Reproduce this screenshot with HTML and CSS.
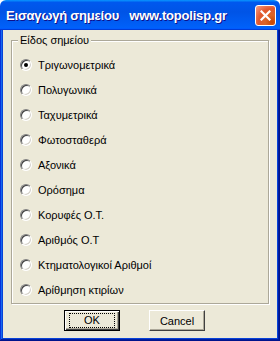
FILE: index.html
```html
<!DOCTYPE html>
<html>
<head>
  <title>Εισαγωγή σημείου</title>
  <link rel="stylesheet" href="styles.css">
</head>
<body>
  <div class="window">
    <div class="titlebar">
      <span class="title">Εισαγωγή σημείου   www.topolisp.gr</span>
      <button class="close" aria-label="Close">
        <svg width="11" height="11" viewBox="0 0 11 11"><path d="M1.5 1.5 L9.5 9.5 M9.5 1.5 L1.5 9.5" stroke="#fff" stroke-width="2.2" stroke-linecap="square"/></svg>
      </button>
    </div>
    <div class="frame">
      <div class="client">
        <div class="group">
          <span class="group-title">Είδος σημείου</span>
          <label class="option"><span class="radio checked"></span>Τριγωνομετρικά</label>
          <label class="option"><span class="radio"></span>Πολυγωνικά</label>
          <label class="option"><span class="radio"></span>Ταχυμετρικά</label>
          <label class="option"><span class="radio"></span>Φωτοσταθερά</label>
          <label class="option"><span class="radio"></span>Αξονικά</label>
          <label class="option"><span class="radio"></span>Ορόσημα</label>
          <label class="option"><span class="radio"></span>Κορυφές Ο.Τ.</label>
          <label class="option"><span class="radio"></span>Αριθμός Ο.Τ</label>
          <label class="option"><span class="radio"></span>Κτηματολογικοί Αριθμοί</label>
          <label class="option"><span class="radio"></span>Αρίθμηση κτιρίων</label>
        </div>
        <div class="buttons">
          <button class="btn default"><span class="focus">OK</span></button>
          <button class="btn">Cancel</button>
        </div>
      </div>
    </div>
  </div>
</body>
</html>
```

FILE: styles.css
```css
body {
  margin: 0;
  padding: 0;
  font-family: 'Liberation Sans', Arial, sans-serif;
  font-size: 11px;
  color: #000;
  background: #fff;
}
.window {
  width: 280px;
  height: 341px;
  display: flex;
  flex-direction: column;
}
.titlebar {
  height: 30px;
  flex: none;
  display: flex;
  align-items: center;
  justify-content: space-between;
  padding: 0 4px 0 6px;
  box-sizing: border-box;
  background: linear-gradient(180deg, #0997ff, #0058ee 8%, #0054e6 40%, #0060f8 88%, #0062fa 93%, #005bff 95%, #003dd7 96%, #003dd7);
  border-radius: 6px 6px 0 0;
}
.title {
  white-space: pre;
  color: #fff;
  font-family: 'Liberation Sans', Arial, sans-serif;
  font-weight: bold;
  font-size: 13px;
  letter-spacing: -0.2px;
  text-shadow: 1px 1px 0 #0f1089;
}
.close {
  width: 21px;
  height: 21px;
  padding: 0;
  border: 1px solid #fff;
  border-radius: 3px;
  background: radial-gradient(circle at 85% 85%, #cc4600 0%, #dc6527 30%, #e2592f 60%, #f7a08a 100%);
  display: flex;
  align-items: center;
  justify-content: center;
}
.frame {
  flex: 1;
  display: flex;
  padding: 0 3px 3px;
  background: #0842d8;
  box-shadow: inset -1px -1px #00138c, inset 1px 0 #0831d9, inset -2px -2px #001ea0, inset 2px 0 #166aee;
}
.client {
  flex: 1;
  background: #ece9d8;
  display: flex;
  flex-direction: column;
}
.group {
  position: relative;
  margin: 10px 0 0 8px;
  width: 258px;
  height: 264px;
  box-sizing: border-box;
  border: 1px solid #aca899;
  box-shadow: 1px 1px 0 #fff, inset 1px 1px 0 #fff;
  padding: 11px 0 0 8px;
}
.group-title {
  position: absolute;
  top: -7px;
  left: 6px;
  padding: 0 2px;
  line-height: 13px;
  background: #ece9d8;
}
.option {
  display: flex;
  align-items: center;
  height: 25px;
  gap: 6px;
}
.radio {
  width: 12px;
  height: 12px;
  box-sizing: border-box;
  border-radius: 50%;
  background: #fff;
  border: 1px solid;
  border-color: #808080 #fff #fff #808080;
  box-shadow: inset 1px 1px 0 #404040, inset -1px -1px 0 #d4d0c8;
  display: flex;
  align-items: center;
  justify-content: center;
}
.radio.checked::after {
  content: "";
  width: 4px;
  height: 4px;
  border-radius: 50%;
  background: #000;
}
.buttons {
  display: flex;
  gap: 29px;
  margin: 6px 0 0 61px;
}
.btn {
  width: 56px;
  height: 21px;
  padding: 0;
  font-family: 'Liberation Sans', Arial, sans-serif;
  font-size: 11px;
  color: #000;
  background: #ece9d8;
  border: 1px solid;
  border-color: #fff #404040 #404040 #fff;
  box-shadow: inset -1px -1px 0 #aca899;
}
.btn.default {
  border: 1px solid #000;
  box-shadow: inset 1px 1px 0 #fff, inset -1px -1px 0 #404040, inset -2px -2px 0 #aca899;
  display: flex;
  align-items: center;
  justify-content: center;
}
.focus {
  display: block;
  width: 44px;
  height: 13px;
  line-height: 13px;
  border: 1px dotted #000;
}
```
